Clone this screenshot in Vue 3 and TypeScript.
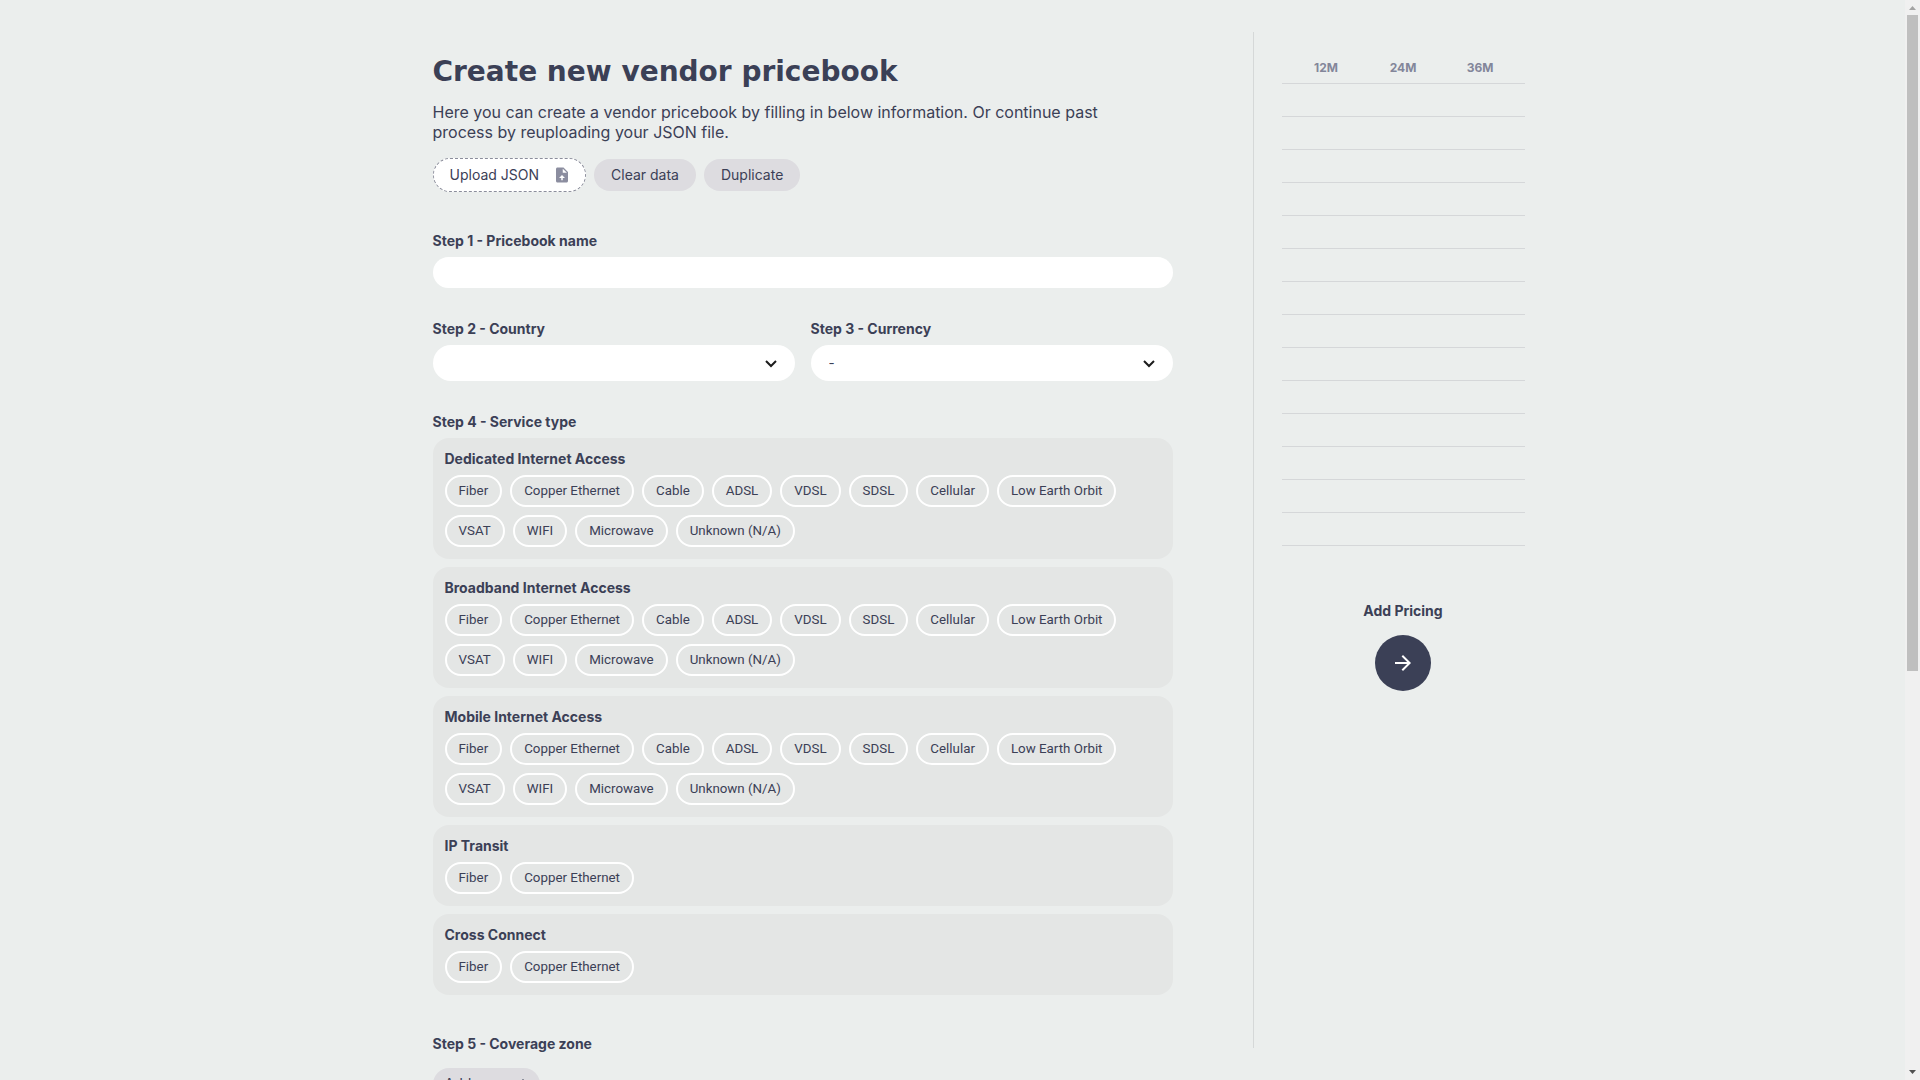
<script setup lang="ts">
import { ref } from 'vue'

interface ServiceType {
  name: string
  media: string[]
}

const internetMedia: string[] = [
  'Fiber', 'Copper Ethernet', 'Cable', 'ADSL', 'VDSL', 'SDSL', 'Cellular',
  'Low Earth Orbit', 'VSAT', 'WIFI', 'Microwave', 'Unknown (N/A)',
]
const directMedia: string[] = ['Fiber', 'Copper Ethernet']

const services: ServiceType[] = [
  { name: 'Dedicated Internet Access', media: internetMedia },
  { name: 'Broadband Internet Access', media: internetMedia },
  { name: 'Mobile Internet Access', media: internetMedia },
  { name: 'IP Transit', media: directMedia },
  { name: 'Cross Connect', media: directMedia },
]

const terms: string[] = ['12M', '24M', '36M']
const pricingRows = 14

const pricebookName = ref('')
const country = ref('')
const currency = ref('-')
</script>

<template>
  <div class="window">
    <div class="scroller">
      <main class="container">
        <form class="form" @submit.prevent>
          <h1 class="title">Create new vendor pricebook</h1>
          <p class="intro">
            Here you can create a vendor pricebook by filling in below information. Or continue past
            process by reuploading your JSON file.
          </p>
          <div class="actions">
            <button type="button" class="button upload">
              Upload JSON
              <svg width="18" height="18" viewBox="0 0 24 24" aria-hidden="true">
                <path fill="currentColor" d="M14 2H6c-1.100 0-1.990.9-1.990 2L4 20c0 1.100.89 2 1.990 2H18c1.100 0 2-.9 2-2V8l-6-6zm-1 7V3.500L18.500 9H13zm-1 3l4 4h-3v3h-2v-3H8l4-4z" />
              </svg>
            </button>
            <button type="button" class="button">Clear data</button>
            <button type="button" class="button">Duplicate</button>
          </div>

          <div class="field">
            <label class="label" for="name">Step 1 - Pricebook name</label>
            <input id="name" v-model="pricebookName" class="input" type="text" />
          </div>

          <div class="pair">
            <div class="field">
              <label class="label" for="country">Step 2 - Country</label>
              <div class="select-box">
                <select id="country" v-model="country" class="select">
                  <option value=""></option>
                </select>
                <svg class="chevron" width="12" height="8" viewBox="0 0 12 8" aria-hidden="true">
                  <path d="M1 1l5 5 5-5" fill="none" stroke="#1c1c1c" stroke-width="2" />
                </svg>
              </div>
            </div>
            <div class="field">
              <label class="label" for="currency">Step 3 - Currency</label>
              <div class="select-box">
                <select id="currency" v-model="currency" class="select">
                  <option value="-">-</option>
                </select>
                <svg class="chevron" width="12" height="8" viewBox="0 0 12 8" aria-hidden="true">
                  <path d="M1 1l5 5 5-5" fill="none" stroke="#1c1c1c" stroke-width="2" />
                </svg>
              </div>
            </div>
          </div>

          <section class="field">
            <h2 class="label">Step 4 - Service type</h2>
            <div class="panels">
              <section v-for="service in services" :key="service.name" class="panel">
                <h3 class="label">{{ service.name }}</h3>
                <div class="pills">
                  <button v-for="medium in service.media" :key="medium" type="button" class="pill">
                    {{ medium }}
                  </button>
                </div>
              </section>
            </div>
          </section>

          <section class="zones">
            <h2 class="label">Step 5 - Coverage zone</h2>
            <button type="button" class="button add-zone">
              Add zone
              <svg width="10" height="10" viewBox="0 0 10 10" aria-hidden="true">
                <path d="M5 0v10M0 5h10" fill="none" stroke="currentColor" />
              </svg>
            </button>
          </section>
        </form>

        <aside class="summary">
          <table class="prices">
            <colgroup>
              <col class="edge" />
              <col v-for="term in terms" :key="term" />
              <col class="edge" />
            </colgroup>
            <thead>
              <tr>
                <td></td>
                <th v-for="term in terms" :key="term" scope="col">{{ term }}</th>
                <td></td>
              </tr>
            </thead>
            <tbody>
              <tr v-for="row in pricingRows" :key="row">
                <td colspan="5"></td>
              </tr>
            </tbody>
          </table>
          <div class="next">
            <span id="next-label" class="label">Add Pricing</span>
            <button type="button" class="round" aria-labelledby="next-label">
              <svg width="24" height="24" viewBox="0 0 24 24" aria-hidden="true">
                <path fill="currentColor" d="M12 4l-1.410 1.410L16.170 11H4v2h12.170l-5.580 5.590L12 20l8-8z" />
              </svg>
            </button>
          </div>
        </aside>
      </main>
    </div>

    <div class="scrollbar" aria-hidden="true">
      <svg class="arrow" width="15" height="15" viewBox="0 0 15 15"><path d="M4 10h7L7.500 6z" fill="#a3a3a3" /></svg>
      <div class="track"><div class="thumb"></div></div>
      <svg class="arrow" width="15" height="15" viewBox="0 0 15 15"><path d="M4 5h7L7.500 9z" fill="#505050" /></svg>
    </div>
  </div>
</template>

<style>
body {
  margin: 0;
  background: #ebeeed;
}
</style>

<style scoped>
* {
  box-sizing: border-box;
}

.window {
  display: flex;
  height: 100vh;
  overflow: hidden;
  background: #ebeeed;
  color: #3b4056;
  font-family: Inter, "Liberation Sans", sans-serif;
  font-size: 14px;
  font-optical-sizing: none;
}

.scroller {
  flex: 1;
  min-width: 0;
  overflow: hidden;
}

.container {
  display: flex;
  align-items: flex-start;
  max-width: 1200px;
  margin: 0 auto;
}

h1, h2, h3, p {
  margin: 0;
}

button, input, select {
  font-family: inherit;
  color: inherit;
  border: 0;
}

.form {
  width: 75%;
  padding: 56px 80px;
}

.title {
  font-family: "DejaVu Sans", sans-serif;
  font-size: 28px;
  font-weight: 700;
  line-height: 32px;
  white-space: nowrap;
}

.intro {
  max-width: 700px;
  margin: 14px 0 16px;
  font-size: 16px;
  line-height: 20px;
}

.actions {
  display: flex;
  align-items: center;
  gap: 8px;
  margin-bottom: 40px;
}

.button {
  display: flex;
  align-items: center;
  height: 32px;
  padding: 0 17px 1px;
  border-radius: 16px;
  background: #dddce0;
  font-size: 14px;
}

.upload {
  gap: 14px;
  height: 34px;
  padding: 0 14px 1px 16px;
  border: 1px dashed #8b8d9b;
  border-radius: 17px;
  background: #fff;
}

.upload svg {
  color: #8b8d9f;
}

.field {
  display: flex;
  flex: 1;
  flex-direction: column;
  gap: 8px;
  min-width: 0;
}

.label {
  font-size: 14px;
  font-weight: 700;
  line-height: 17px;
}

.input {
  width: 100%;
  height: 31px;
  padding: 0 16px;
  border-radius: 16px;
  background: #fff;
  font-size: 14px;
}

.pair {
  display: flex;
  gap: 16px;
  margin: 32px 0;
}

.select-box {
  position: relative;
}

.select {
  display: block;
  width: 100%;
  height: 36px;
  padding: 0 40px 0 18px;
  border-radius: 18px;
  background: #fff;
  appearance: none;
}

.chevron {
  position: absolute;
  top: 15px;
  right: 18px;
  pointer-events: none;
}

.panels {
  display: flex;
  flex-direction: column;
  gap: 8px;
}

.panel {
  padding: 12px;
  border-radius: 16px;
  background: #e4e6e5;
}

.pills {
  display: flex;
  flex-wrap: wrap;
  gap: 8px;
  margin-top: 8px;
}

.pill {
  height: 32px;
  padding: 0 12px 1px;
  border: 2px solid #fff;
  border-radius: 16px;
  background: transparent;
  font-family: Roboto, sans-serif;
}

.zones {
  display: flex;
  flex-direction: column;
  align-items: flex-start;
  gap: 16px;
  margin-top: 40px;
}

.add-zone {
  gap: 10px;
  padding: 0 12px 1px;
}

.summary {
  width: 25%;
  height: calc(100vh - 64px);
  margin-top: 32px;
  padding: 18px 28px;
  border-left: 1px solid #d5d8d8;
}

.prices {
  width: 100%;
  table-layout: fixed;
  border-collapse: collapse;
}

.edge {
  width: 6px;
}

.prices tr {
  height: 33px;
  border-bottom: 1px solid #d5d7d9;
}

.prices td, .prices th {
  padding: 0;
}

.prices th {
  padding-top: 2px;
  color: #83869a;
  font-size: 12px;
  font-weight: 700;
  text-align: center;
}

.next {
  display: flex;
  flex-direction: column;
  align-items: center;
  gap: 16px;
  margin-top: 56px;
}

.round {
  display: grid;
  place-items: center;
  width: 56px;
  height: 56px;
  padding: 0;
  border-radius: 50%;
  background: #3b4056;
  color: #fff;
}

.scrollbar {
  display: flex;
  flex-direction: column;
  width: 15px;
  background: #f0f0f0;
}

.arrow {
  display: block;
}

.track {
  flex: 1;
  padding: 0 2px;
}

.thumb {
  height: 62.5%;
  background: #bfbfbf;
}
</style>
